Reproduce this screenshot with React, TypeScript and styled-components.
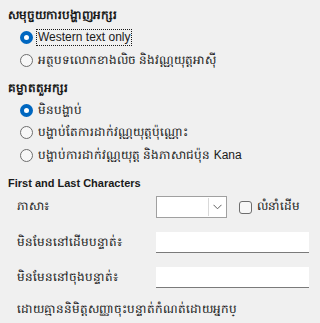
import React, { useState } from 'react';
import styled, { createGlobalStyle } from 'styled-components';

const GlobalStyle = createGlobalStyle`
  html, body {
    margin: 0;
    padding: 0;
    background: #f0f0f0;
  }
  body {
    font-family: "Liberation Sans", "Noto Sans", "DejaVu Sans", sans-serif;
    font-size: 12px;
    color: #1a1a1a;
  }
`;

const Panel = styled.div`
  width: 318px;
  height: 323px;
  box-sizing: border-box;
  padding: 7px 9px 0 8px;
  overflow: hidden;
  display: flex;
  flex-direction: column;
`;

// Latin heading is set a touch smaller so it matches the Segoe UI width
const Heading = styled.div<{ $gap?: number; $size?: number }>`
  height: 16px;
  line-height: 16px;
  font-size: ${(p) => p.$size ?? 12}px;
  font-weight: 700;
  white-space: nowrap;
  margin-top: ${(p) => p.$gap ?? 0}px;
`;

const RadioList = styled.div`
  display: flex;
  flex-direction: column;
  padding: 3px 0 0 12px;
`;

const RadioRow = styled.label<{ $h: number }>`
  height: ${(p) => p.$h}px;
  display: flex;
  align-items: center;
  gap: 4px;
  white-space: nowrap;
  cursor: default;
`;

const RadioDot = styled.span<{ $on: boolean }>`
  width: 13px;
  height: 13px;
  box-sizing: border-box;
  border-radius: 50%;
  flex: none;
  border: ${(p) => (p.$on ? '4px solid #0067c0' : '1px solid #6e6e6e')};
  background: ${(p) => (p.$on ? '#ffffff' : '#f7f7f7')};
`;

const RadioText = styled.span<{ $focus?: boolean }>`
  padding: 0 1px;
  line-height: 15px;
  outline: ${(p) => (p.$focus ? '1px dotted #1a1a1a' : 'none')};
`;

const Form = styled.div`
  display: grid;
  grid-template-columns: 139px 1fr;
  row-gap: 14px;
  padding: 5px 0 0 9px;
  align-items: center;
`;

const FieldLabel = styled.div`
  white-space: nowrap;
`;

const LangCell = styled.div`
  display: flex;
  align-items: center;
  gap: 12px;
`;

const Combo = styled.div`
  width: 71px;
  height: 22px;
  box-sizing: border-box;
  background: #fff;
  border: 1px solid #a0a0a0;
  display: flex;
  justify-content: flex-end;
  padding: 1px;
`;

const ComboButton = styled.div`
  width: 17px;
  box-sizing: border-box;
  border-left: 1px solid #d9d9d9;
  display: flex;
  align-items: center;
  justify-content: center;
  color: #606060;
`;

const CheckRow = styled.label`
  display: flex;
  align-items: center;
  gap: 5px;
  white-space: nowrap;
`;

const CheckBox = styled.span`
  width: 13px;
  height: 13px;
  box-sizing: border-box;
  border: 1px solid #6e6e6e;
  border-radius: 3px;
  background: #f7f7f7;
`;

const TextBox = styled.div`
  height: 21px;
  box-sizing: border-box;
  background: #fff;
  border-bottom: 1px solid #7a7a7a;
`;

const Note = styled.div`
  grid-column: 1 / -1;
  white-space: nowrap;
  overflow: hidden;
  margin-top: -1px;
`;

const Chevron = () => (
  <svg width="9" height="6" viewBox="0 0 9 6" fill="none">
    <path d="M0.5 0.8 L4.5 4.8 L8.5 0.8" stroke="currentColor" strokeWidth="1" />
  </svg>
);

export default function App() {
  const [script, setScript] = useState(0);
  const [compress, setCompress] = useState(0);

  const scripts = ['Western text only', 'អត្ថបទលោកខាងលិច និងវណ្ណយុត្តអាស៊ី'];
  const modes = [
    'មិនបង្ហាប់',
    'បង្ហាប់តែការដាក់វណ្ណយុត្តប៉ុណ្ណោះ',
    'បង្ហាប់ការដាក់វណ្ណយុត្ត និងភាសាជប៉ុន Kana',
  ];

  return (
    <>
      <GlobalStyle />
      <Panel>
        <Heading>សមុច្ចយការបង្ហាញអក្សរ</Heading>
        <RadioList>
          {scripts.map((t, i) => (
            <RadioRow key={t} $h={23} onClick={() => setScript(i)}>
              <RadioDot $on={script === i} />
              <RadioText $focus={i === 0}>{t}</RadioText>
            </RadioRow>
          ))}
        </RadioList>

        <Heading $gap={8}>គម្លាតតួអក្សរ</Heading>
        <RadioList>
          {modes.map((t, i) => (
            <RadioRow key={t} $h={22.5} onClick={() => setCompress(i)}>
              <RadioDot $on={compress === i} />
              <RadioText>{t}</RadioText>
            </RadioRow>
          ))}
        </RadioList>

        <Heading $gap={8.5} $size={11}>First and Last Characters</Heading>
        <Form>
          <FieldLabel>ភាសា៖</FieldLabel>
          <LangCell>
            <Combo>
              <ComboButton>
                <Chevron />
              </ComboButton>
            </Combo>
            <CheckRow>
              <CheckBox />
              លំនាំដើម
            </CheckRow>
          </LangCell>

          <FieldLabel>មិនមែននៅដើមបន្ទាត់៖</FieldLabel>
          <TextBox />

          <FieldLabel>មិនមែននៅចុងបន្ទាត់៖</FieldLabel>
          <TextBox />

          <Note>ដោយគ្មាននិមិត្តសញ្ញាចុះបន្ទាត់កំណត់ដោយអ្នកប្</Note>
        </Form>
      </Panel>
    </>
  );
}
